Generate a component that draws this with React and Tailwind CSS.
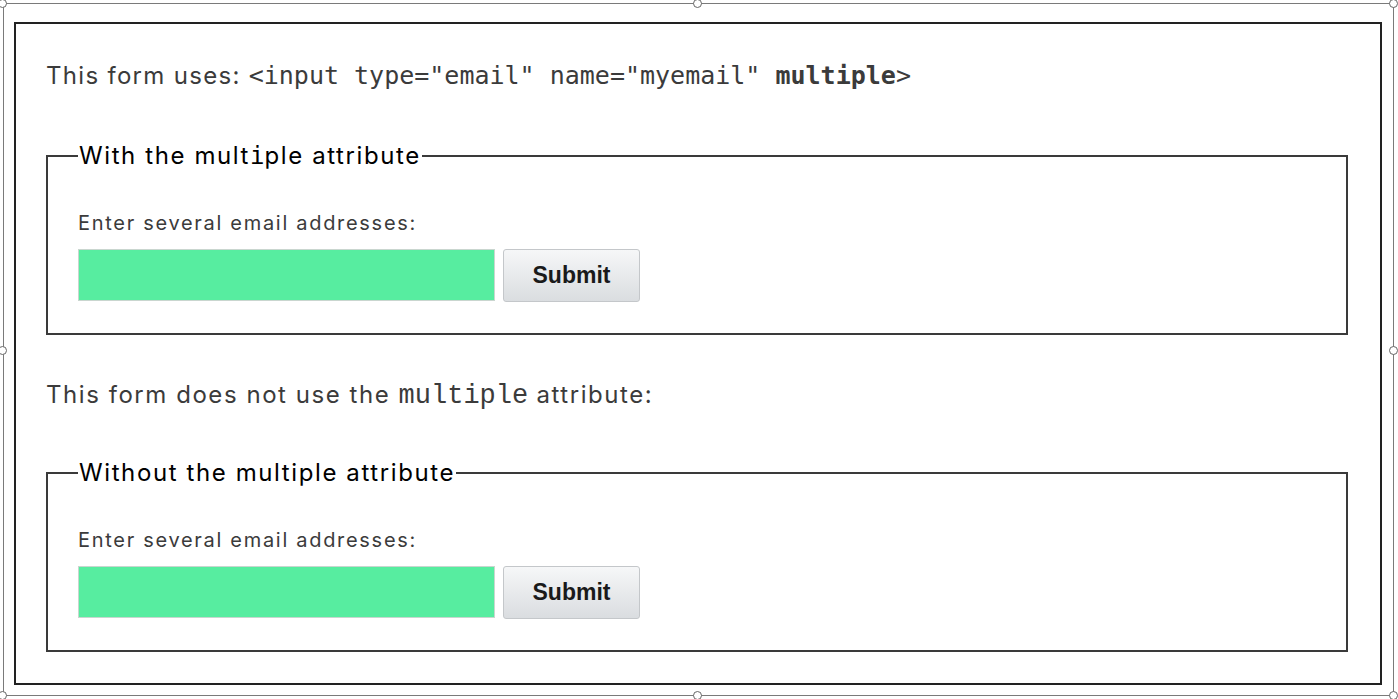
import React from 'react';

const sans = { fontFamily: 'Inter, Roboto, "Liberation Sans", sans-serif' };
const mono = { fontFamily: '"DejaVu Sans Mono", monospace' };

// little round grips on the selection frame
const Handle = ({ className }) => (
  <span className={`absolute w-[9px] h-[9px] rounded-full border border-[#666] bg-white ${className}`} />
);

function EmailForm({ legend }) {
  return (
    <fieldset className="border-2 border-[#3a3a3a] px-[30px] pt-[38px] pb-[31px]">
      <legend className="px-[1px] text-[24px] leading-[30px] tracking-[1.6px] text-black">{legend}</legend>
      <label className="block text-[20px] leading-[28px] tracking-[1.7px] text-[#3b3b3b]">Enter several email addresses:</label>
      <div className="mt-[12px] flex items-start gap-[8px]">
        <input type="email" className="w-[417px] h-[52px] bg-[#57eda0] border border-[#c9d6cf] outline-none" />
        <button
          type="submit"
          className="w-[137px] h-[53px] rounded-[3px] border border-[#c4c7ca] bg-gradient-to-b from-[#f6f7f8] to-[#dadde0] text-[23px] font-bold text-[#1a1a1a]"
          style={{ fontFamily: '"Liberation Sans", Arial, sans-serif' }}
        >
          Submit
        </button>
      </div>
    </fieldset>
  );
}

export default function App() {
  return (
    <div className="relative w-[1398px] h-[699px] bg-white pt-[3px] pl-[3px] pr-[4px] pb-[3px]" style={sans}>
      <div className="h-full border border-[#7a7a7a] pt-[18px] pl-[10px] pr-[11px] pb-[10px]">
        <div className="h-full border-2 border-[#222] pl-[30px] pr-[32px] pt-[37px]">
          <p className="text-[24px] leading-[30px] tracking-[1.3px] text-[#3b3b3b]">
            This form uses:{' '}
            <code className="text-[25px] leading-none tracking-normal" style={mono}>
              &lt;input type="email" name="myemail" <b>multiple</b>&gt;
            </code>
          </p>
          <div className="mt-[50px]">
            <EmailForm
              legend={
                <>
                  With the mult<span className="leading-none tracking-normal" style={mono}>i</span>ple attribute
                </>
              }
            />
          </div>
          <p className="mt-[45px] text-[24px] leading-[30px] tracking-[1.55px] text-[#3b3b3b]">
            This form does not use the{' '}
            <code className="text-[27px] leading-none tracking-normal" style={{ fontFamily: '"Liberation Mono", monospace' }}>
              multiple
            </code>{' '}
            attribute:
          </p>
          <div className="mt-[48px]">
            <EmailForm legend="Without the multiple attribute" />
          </div>
        </div>
      </div>
      <Handle className="left-[-2px] top-[-1px]" />
      <Handle className="left-[693px] top-[-1px]" />
      <Handle className="left-[1389px] top-[-1px]" />
      <Handle className="left-[-2px] top-[346px]" />
      <Handle className="left-[1389px] top-[346px]" />
      <Handle className="left-[-2px] top-[691px]" />
      <Handle className="left-[693px] top-[691px]" />
      <Handle className="left-[1389px] top-[691px]" />
    </div>
  );
}
